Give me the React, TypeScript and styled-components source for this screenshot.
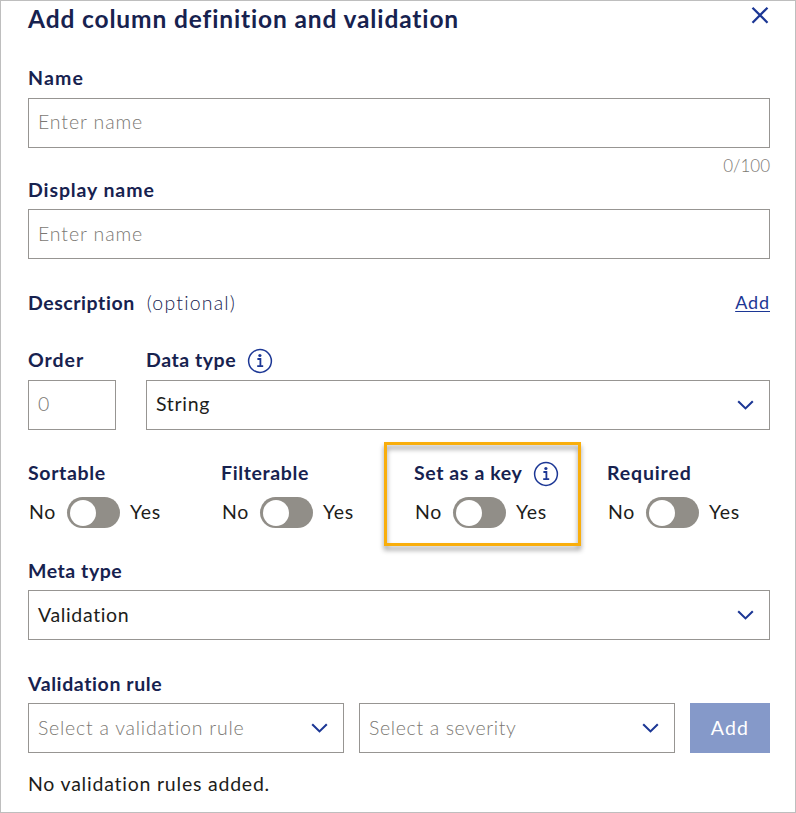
import React from "react";
import styled, { createGlobalStyle } from "styled-components";

const navy = "#17224f";
const blue = "#1c3795";
const grey = "#7b7873";

const GlobalStyle = createGlobalStyle`
  *, *::before, *::after { box-sizing: border-box; }
  body { margin: 0; background: #fff; }
  button, input { font: inherit; }
`;

const Dialog = styled.main`
  width: 796px;
  height: 813px;
  border: 1px solid #bebebe;
  padding: 0 25px 0 27px;
  background: #fff;
  color: #1d1d1b;
  font-family: Lato, "Liberation Sans", sans-serif;
  font-size: 19.5px;
  overflow: hidden;
`;

const Header = styled.header`
  display: flex;
  justify-content: space-between;
  height: 57px;
`;

const Title = styled.h1<{ $track: number }>`
  margin: 0;
  font-size: 24.5px;
  line-height: 36px;
  font-weight: 700;
  color: ${navy};
  white-space: nowrap;
  letter-spacing: ${(p) => p.$track}px;
`;

const CloseButton = styled.button`
  display: block;
  width: 18px;
  height: 18px;
  margin: 5px 1px 0 0;
  padding: 0;
  border: 0;
  background: none;
  svg { display: block; }
`;

const LabelRow = styled.div<{ $h: number; $pt?: number; $pb?: number }>`
  display: flex;
  align-items: center;
  height: ${(p) => p.$h}px;
  padding-top: ${(p) => p.$pt ?? 0}px;
  padding-bottom: ${(p) => p.$pb ?? 0}px;
`;

const Label = styled.span<{ $track?: number }>`
  padding-bottom: 1px;
  font-weight: 700;
  color: ${navy};
  white-space: nowrap;
  letter-spacing: ${(p) => p.$track ?? 0}px;
`;

const Optional = styled.span`
  margin-left: 12px;
  padding-bottom: 1px;
  color: ${navy};
  font-weight: 300;
  letter-spacing: 1.2px;
`;

const Value = styled.span<{ $track?: number; $muted?: boolean; $pb?: number }>`
  padding-bottom: ${(p) => p.$pb ?? 2}px;
  color: ${(p) => (p.$muted ? grey : "inherit")};
  font-weight: ${(p) => (p.$muted ? 300 : 400)};
  white-space: nowrap;
  letter-spacing: ${(p) => p.$track ?? 0}px;
`;

const Box = styled.div`
  display: flex;
  align-items: center;
  justify-content: space-between;
  width: 100%;
  height: 50px;
  padding: 0 15.5px 0 9px;
  border: 1px solid #979592;
  background: #fff;
`;

const Counter = styled.div`
  margin-top: 8px;
  height: 19px;
  line-height: 20px;
  font-size: 17px;
  font-weight: 300;
  text-align: right;
  color: ${grey};
`;

const DescriptionRow = styled.div`
  display: flex;
  align-items: center;
  height: 81px;
  padding-top: 6px;
`;

const AddLink = styled.a`
  margin-left: auto;
  padding-bottom: 1px;
  font-size: 18px;
  font-weight: 400;
  color: ${blue};
  text-decoration: underline;
  text-decoration-thickness: 1px;
  text-underline-offset: 2px;
  letter-spacing: 0.9px;
`;

const TypeGrid = styled.div`
  display: grid;
  grid-template-columns: 88px 1fr;
  column-gap: 30px;
`;

const InfoSvg = styled.svg`
  display: block;
  flex: none;
  margin: 2px 0 0 11px;
`;

const ToggleGrid = styled.div`
  display: grid;
  grid-template-columns: repeat(4, 193px);
  height: 71px;
  margin: 27px 0 23px;
`;

const ToggleCell = styled.div`
  position: relative;
`;

const ToggleLine = styled.div`
  display: flex;
  align-items: center;
  height: 31px;
  margin-top: 9px;
`;

const ToggleText = styled.span`
  padding-bottom: 3px;
  letter-spacing: 0.7px;
`;

const NoText = styled(ToggleText)`
  width: 39px;
  padding-left: 1px;
`;

const YesText = styled(ToggleText)`
  margin-left: 10px;
`;

const Track = styled.span`
  display: flex;
  align-items: center;
  width: 53px;
  height: 31px;
  padding-left: 3.4px;
  border-radius: 16px;
  background: #918e88;
`;

const Knob = styled.span`
  width: 26px;
  height: 26px;
  border-radius: 50%;
  background: #fff;
`;

const Highlight = styled.div`
  position: absolute;
  left: -30px;
  top: -15px;
  width: 197px;
  height: 104px;
  border: 3px solid #f9ae0c;
  filter: drop-shadow(0 4px 2.5px rgba(0, 0, 0, 0.42));
  pointer-events: none;
`;

const RuleRow = styled.div`
  display: flex;
`;

const RuleBox = styled(Box)`
  width: 316px;
  margin-right: 15px;
`;

const AddButton = styled.button`
  width: 80px;
  height: 50px;
  padding: 0 0 2px;
  border: 0;
  background: #8599c9;
  color: #fff;
  letter-spacing: 1.2px;
`;

const Note = styled.p<{ $track: number }>`
  margin: 19px 0 0;
  line-height: 24px;
  letter-spacing: ${(p) => p.$track}px;
`;

const Chevron = () => (
  <svg width="17" height="12" viewBox="0 0 17 12" fill="none" stroke={blue} strokeWidth="2.1">
    <path d="M1.2 2.2 8.5 9.4 15.8 2.2" />
  </svg>
);

const Info = () => (
  <InfoSvg width="26" height="26" viewBox="0 0 26 26" fill="none" stroke={blue}>
    <circle cx="13" cy="13" r="11.4" strokeWidth="1.5" />
    <path d="M10.4 11h3v7.6M10.2 18.1h6" strokeWidth="1.8" />
    <circle cx="12.9" cy="7.5" r="1.6" fill={blue} stroke="none" />
  </InfoSvg>
);

const toggles = [
  { label: "Sortable", track: 0.65 },
  { label: "Filterable", track: 0.62 },
  { label: "Set as a key", track: 0.6, info: true },
  { label: "Required", track: 0.85 },
];

export default function App() {
  return (
    <>
      <GlobalStyle />
      <Dialog>
        <Header>
          <Title $track={0.87}>Add column definition and validation</Title>
          <CloseButton aria-label="Close">
            <svg width="18" height="18" viewBox="0 0 18 18" stroke={blue} strokeWidth="2.3">
              <path d="M1.5 1.7 16.5 16.7M16.5 1.7 1.5 16.7" />
            </svg>
          </CloseButton>
        </Header>

        <LabelRow $h={40}>
          <Label $track={1.2}>Name</Label>
        </LabelRow>
        <Box>
          <Value $muted $track={0.9} $pb={3}>Enter name</Value>
        </Box>
        <Counter>0/100</Counter>

        <LabelRow $h={34} $pb={4}>
          <Label $track={0.9}>Display name</Label>
        </LabelRow>
        <Box>
          <Value $muted $track={0.9}>Enter name</Value>
        </Box>

        <DescriptionRow>
          <Label $track={0.55}>Description</Label>
          <Optional>(optional)</Optional>
          <AddLink>Add</AddLink>
        </DescriptionRow>

        <TypeGrid>
          <div>
            <LabelRow $h={40}>
              <Label $track={0.95}>Order</Label>
            </LabelRow>
            <Box>
              <Value $muted $pb={3}>0</Value>
            </Box>
          </div>
          <div>
            <LabelRow $h={40}>
              <Label $track={0.55}>Data type</Label>
              <Info />
            </LabelRow>
            <Box>
              <Value $track={0.7} $pb={3}>String</Value>
              <Chevron />
            </Box>
          </div>
        </TypeGrid>

        <ToggleGrid>
          {toggles.map((t) => (
            <ToggleCell key={t.label}>
              {t.info && <Highlight />}
              <LabelRow $h={31} $pt={1}>
                <Label $track={t.track}>{t.label}</Label>
                {t.info && <Info />}
              </LabelRow>
              <ToggleLine>
                <NoText>No</NoText>
                <Track>
                  <Knob />
                </Track>
                <YesText>Yes</YesText>
              </ToggleLine>
            </ToggleCell>
          ))}
        </ToggleGrid>

        <LabelRow $h={39} $pt={1}>
          <Label $track={0.55}>Meta type</Label>
        </LabelRow>
        <Box>
          <Value $track={0.65}>Validation</Value>
          <Chevron />
        </Box>

        <LabelRow $h={63} $pt={25}>
          <Label $track={0.6}>Validation rule</Label>
        </LabelRow>
        <RuleRow>
          <RuleBox>
            <Value $muted $track={0.76}>Select a validation rule</Value>
            <Chevron />
          </RuleBox>
          <RuleBox>
            <Value $muted $track={0.64}>Select a severity</Value>
            <Chevron />
          </RuleBox>
          <AddButton>Add</AddButton>
        </RuleRow>
        <Note $track={0.78}>No validation rules added.</Note>
      </Dialog>
    </>
  );
}
